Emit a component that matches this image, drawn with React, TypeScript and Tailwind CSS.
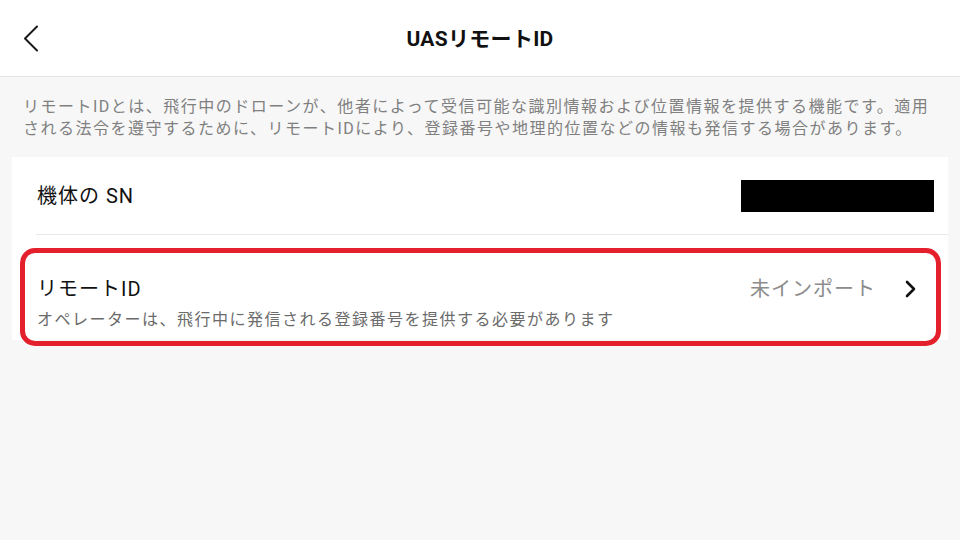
const font = { fontFamily: '"Roboto", "Noto Sans CJK JP", sans-serif' };

function BackIcon() {
  return (
    <svg width="16" height="27" viewBox="0 0 16 27" fill="none">
      <path d="M14 1.5L2 13.5L14 25.5" stroke="#1a1a1a" strokeWidth="2" strokeLinecap="round" strokeLinejoin="round" />
    </svg>
  );
}

function ChevronRight() {
  return (
    <svg width="12" height="20" viewBox="0 0 12 20" fill="none">
      <path d="M3 3L10 10L3 17" stroke="#111" strokeWidth="2.6" strokeLinecap="round" strokeLinejoin="round" />
    </svg>
  );
}

export default function App() {
  return (
    <div className="flex h-[540px] w-[960px] flex-col bg-[#f7f7f7]" style={font}>
      <header className="relative flex h-[77px] shrink-0 items-center justify-center border-b border-[#e3e3e3] bg-white pt-[4px]">
        <button className="absolute left-[23px] top-[25px]">
          <BackIcon />
        </button>
        <h1 className="text-[21px] font-bold tracking-[0.3px] text-[#111]">UASリモートID</h1>
      </header>

      <p className="px-[23px] pt-[19px] text-[16px] leading-[22px] tracking-[1.5px] text-[#808080]">
        リモートIDとは、飛行中のドローンが、他者によって受信可能な識別情報および位置情報を提供する機能です。適用される法令を遵守するために、リモートIDにより、登録番号や地理的位置などの情報も発信する場合があります。
      </p>

      <div className="mx-[12px] mt-[17px] bg-white">
        <div className="flex h-[77px] items-center justify-between pr-[14px] pl-[25px]">
          <span className="text-[20px] tracking-[1px] text-[#111]">機体の SN</span>
          <div className="h-[32px] w-[193px] bg-black" />
        </div>
        <div className="ml-[24px] border-t border-[#e8e8e8]" />
        <div className="relative flex h-[105px] flex-col pt-[41px] pr-[32px] pl-[25px]">
          <div className="flex h-[26px] items-center justify-between">
            <span className="text-[20px] tracking-[1px] text-[#111]">リモートID</span>
            <div className="flex items-center gap-[28px]">
              <span className="text-[20px] tracking-[1px] text-[#8c8c8c]">未インポート</span>
              <ChevronRight />
            </div>
          </div>
          <span className="mt-[7px] text-[16px] leading-[22px] tracking-[1.5px] text-[#6b6b6b]">
            オペレーターは、飛行中に発信される登録番号を提供する必要があります
          </span>
          <div className="pointer-events-none absolute top-[13px] right-[7px] -bottom-[6px] left-[8px] rounded-[15px] border-[5px] border-[#e3202b]" />
        </div>
      </div>
    </div>
  );
}
